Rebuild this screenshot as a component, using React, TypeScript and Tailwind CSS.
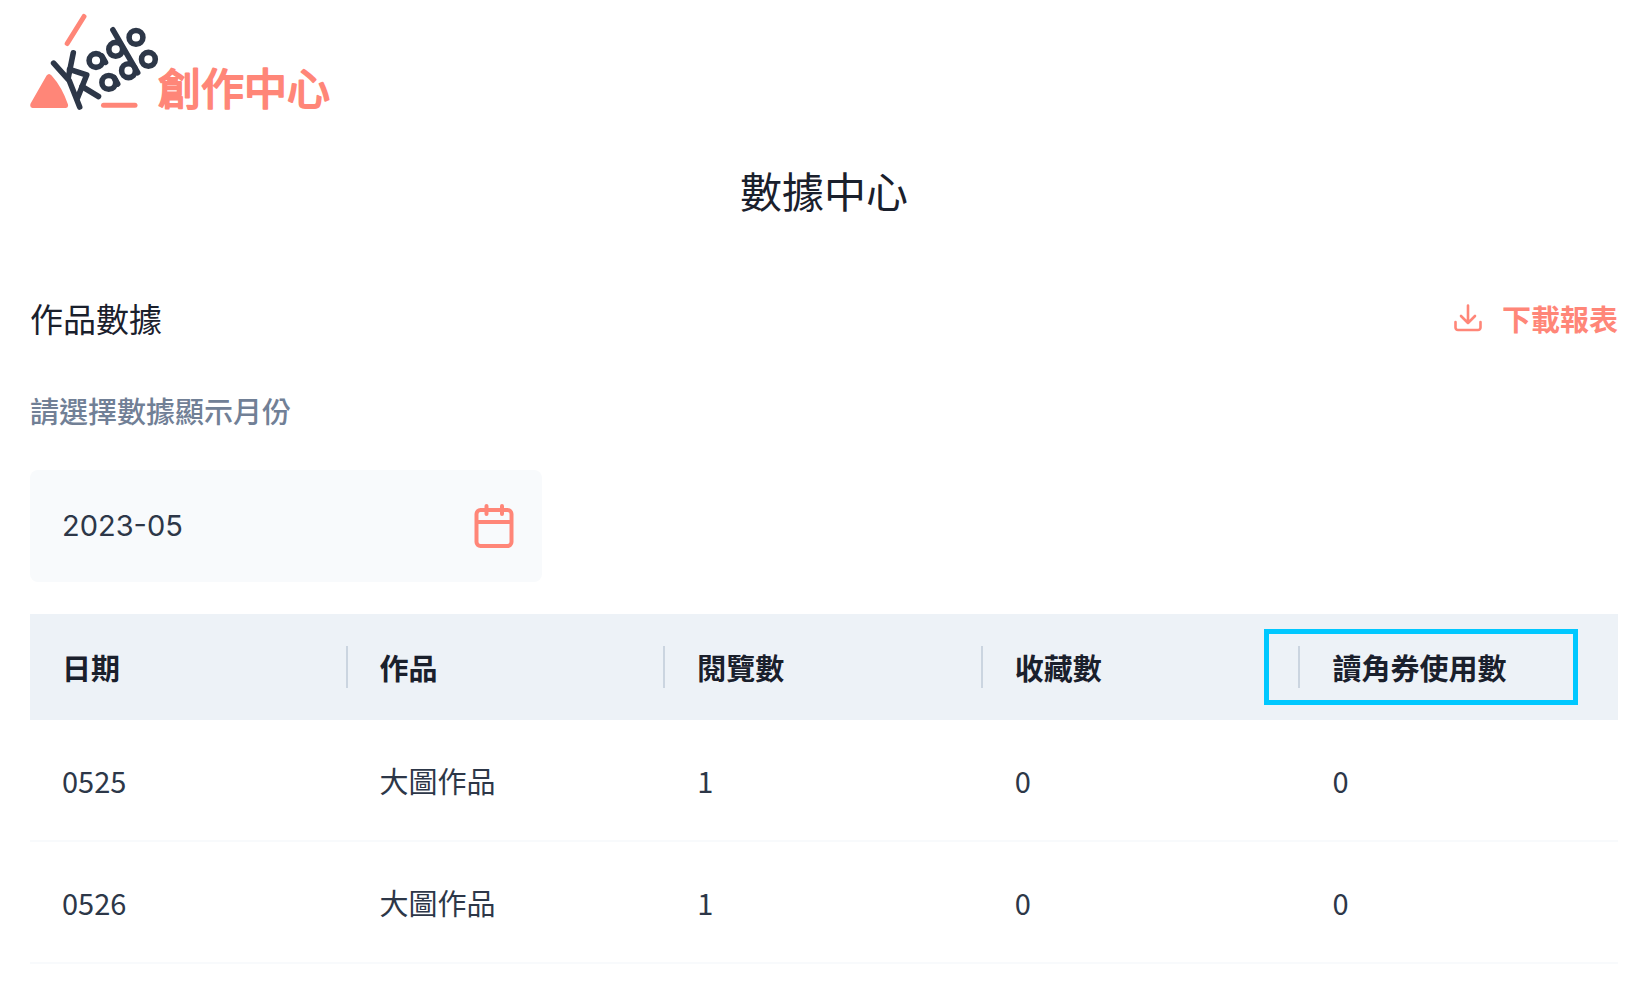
const columns = ['日期', '作品', '閱覽數', '收藏數', '讀角券使用數'];
const rows = [
  ['0525', '大圖作品', '1', '0', '0'],
  ['0526', '大圖作品', '1', '0', '0'],
];

function Logo() {
  return (
    <svg
      width="320"
      height="120"
      viewBox="30 0 320 120"
      fill="none"
      strokeLinecap="round"
      strokeLinejoin="round"
      role="img"
      aria-label="KadoKado 創作中心"
    >
      <g stroke="#ff8678" strokeWidth="5">
        <line x1="84" y1="16.5" x2="67.2" y2="43.5" />
        <line x1="103.5" y1="105.3" x2="135" y2="105.3" />
      </g>
      <path
        d="M46.6 75.5Q49 72.3 51.6 75.5Q62 87 68 104.5Q68.6 107.5 66 108H32.5Q29.3 107.3 30.6 103.5Z"
        fill="#ff8678"
      />
      <g stroke="#2d3748" strokeWidth="5.6">
        <polyline points="53.6,63.2 69.3,80.7 79.7,107" />
        <polyline points="73.3,52.8 68.2,78" />
        <polyline points="69.5,69.3 86.7,75 77.5,98" />
        <line x1="82" y1="86.5" x2="98.5" y2="96.5" />
        <line x1="112.9" y1="29.8" x2="137.7" y2="72.7" />
        <line x1="101.8" y1="56" x2="105.5" y2="62.3" />
        <line x1="114" y1="77.5" x2="117.7" y2="84" />
        <circle cx="96" cy="60.5" r="6.9" />
        <circle cx="115.7" cy="49.3" r="6.9" />
        <circle cx="136" cy="37.4" r="6.9" />
        <circle cx="108.8" cy="82.4" r="6.9" />
        <circle cx="128.5" cy="70.7" r="6.9" />
        <circle cx="148.4" cy="59.3" r="6.9" />
      </g>
      <text
        x="158"
        y="105"
        fontSize="43"
        fill="#ff8678"
        stroke="#ff8678"
        strokeWidth="2"
        className="font-['Noto_Sans_CJK_TC',sans-serif] font-normal"
      >
        創作中心
      </text>
    </svg>
  );
}

function DownloadIcon() {
  return (
    <svg width="28" height="28" viewBox="0 0 28 28" fill="none" stroke="currentColor" strokeWidth="2.6" strokeLinecap="round" strokeLinejoin="round" aria-hidden="true">
      <path d="M14 1.5V19M7 12l7 7 7-7M1.5 18v5.5a2.5 2.5 0 0 0 2.5 2.5h20a2.500 2.500 0 0 0 2.500-2.500V18" />
    </svg>
  );
}

function CalendarIcon() {
  return (
    <svg width="40" height="44" viewBox="0 0 40 44" fill="none" stroke="#ff8678" strokeWidth="4" strokeLinecap="round" aria-hidden="true">
      <rect x="2.5" y="6" width="35" height="36" rx="4" />
      <path d="M3 18H37M12.5 2V10M28 2V10" />
    </svg>
  );
}

export default function App() {
  return (
    <div className="min-h-screen bg-white pr-7 pl-[30px] font-['Noto_Sans_CJK_TC',sans-serif] text-[29px] text-[#2d3748]">
      <header>
        <Logo />
      </header>
      <main>
        <h1 className="mt-10 text-center text-[42px] leading-[60px] text-[#1a202c]">數據中心</h1>
        <div className="mt-[74px] flex items-center justify-between">
          <h2 className="text-[33px] leading-[48px] text-[#1a202c]">作品數據</h2>
          <button type="button" className="flex items-center gap-5 leading-[48px] font-bold text-[#ff8678]">
            <DownloadIcon />
            下載報表
          </button>
        </div>
        <label htmlFor="month" className="mt-[46px] block leading-[44px] font-medium text-[#718096]">
          請選擇數據顯示月份
        </label>
        <div className="mt-[38px] flex h-28 w-full max-w-[512px] items-center rounded-lg bg-[#f8fafc] pr-7 pl-8">
          <input
            id="month"
            type="text"
            defaultValue="2023-05"
            className="min-w-0 flex-1 bg-transparent font-['Inter',sans-serif] text-[29px] outline-none"
          />
          <button type="button" aria-label="選擇月份">
            <CalendarIcon />
          </button>
        </div>
        <table className="mt-8 w-full table-fixed border-collapse text-left">
          <thead className="bg-[#edf2f7] text-[#1a202c]">
            <tr>
              {columns.map((name, i) => (
                <th key={name} scope="col" className="relative py-8 font-bold">
                  <div className={i === 4 ? 'pl-8 leading-[42px]' : 'border-r-2 border-[#cbd5e0] pl-8 leading-[42px]'}>
                    {name}
                  </div>
                  {i === 4 && (
                    <span className="pointer-events-none absolute inset-y-[15px] right-10 -left-9 border-5 border-[#00c8ff]" />
                  )}
                </th>
              ))}
            </tr>
          </thead>
          <tbody>
            {rows.map((row) => (
              <tr key={row[0]} className="border-b-2 border-[#f8fafc]">
                {row.map((value, i) => (
                  <td key={i} className="py-10 pl-8 leading-[40px]">
                    {value}
                  </td>
                ))}
              </tr>
            ))}
          </tbody>
        </table>
      </main>
    </div>
  );
}
